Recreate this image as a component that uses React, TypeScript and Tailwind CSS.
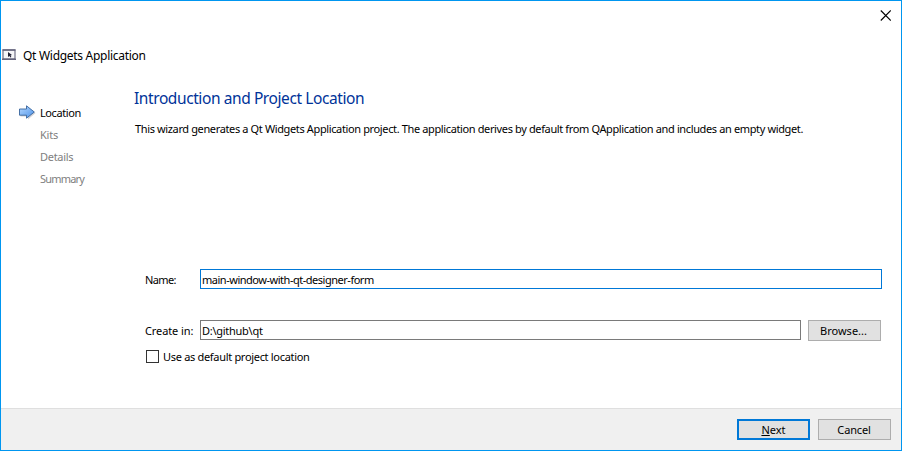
import React from "react";

const steps = [
  { label: "Kits", spacing: "tracking-[-0.2px]" },
  { label: "Details", spacing: "tracking-[-0.3px]" },
  { label: "Summary", spacing: "tracking-[-0.8px]" },
];

function CloseIcon() {
  return (
    <svg width="11" height="11" viewBox="0 0 11 11">
      <path d="M0.8 0.5L10.8 10.5M10.8 0.5L0.8 10.5" stroke="#000" strokeWidth="1.15" fill="none" />
    </svg>
  );
}

function WindowIcon() {
  return (
    <svg width="14" height="12" viewBox="0 0 14 12">
      <rect x="1" y="1" width="12" height="9" fill="#f6f6f8" stroke="#64647c" strokeWidth="1.1" />
      <path d="M0.5 1H13.5" stroke="#64647c" strokeWidth="1.5" />
      <path d="M0 10.3H14" stroke="#64647c" strokeWidth="1.4" />
      <path d="M6 3L10 6L8.5 6.4L9.4 8L8.4 8.6L7.5 7L6 8Z" fill="#242438" />
    </svg>
  );
}

function ArrowIcon() {
  return (
    <svg width="18" height="16" viewBox="0 0 18 16">
      <defs>
        <linearGradient id="arrow" x1="0" y1="0" x2="1" y2="1">
          <stop offset="0" stopColor="#b4d8ff" />
          <stop offset="1" stopColor="#4c91e8" />
        </linearGradient>
      </defs>
      <path d="M1.5 5.2H8.5V2L16.5 8L9 14.6V11.6H1.5Z" fill="#d2d2d6" />
      <path d="M0.5 4H7.5V0.8L15.3 7L7.5 13.2V10.2H0.5Z" fill="url(#arrow)" stroke="#38649c" strokeWidth="0.9" />
    </svg>
  );
}

export default function App() {
  return (
    <div className="flex h-[451px] w-[902px] flex-col overflow-hidden whitespace-nowrap border border-[#0096f0] bg-white font-['Noto_Sans',sans-serif] text-[11px] leading-[16px] text-black">
      <header className="flex h-[67px] flex-col">
        <button className="mr-[10px] mt-[9px] self-end" aria-label="Close">
          <CloseIcon />
        </button>
        <div className="mt-[25px] flex items-center pl-px text-[12px]">
          <WindowIcon />
          <span className="ml-[7px] pt-[2px] tracking-[-0.29px]">Qt Widgets Application</span>
        </div>
      </header>

      <main className="flex h-[340px]">
        <nav className="flex w-[133px] flex-col gap-[6px] pl-[18px] pt-[37px] text-[#808080]">
          <div className="flex items-center text-black">
            <ArrowIcon />
            <span className="ml-[3px] tracking-[-0.4px]">Location</span>
          </div>
          {steps.map((s) => (
            <span key={s.label} className={`pl-[21px] ${s.spacing}`}>{s.label}</span>
          ))}
        </nav>

        <section className="flex w-[750px] flex-col">
          <h1 className="mt-[20px] text-[15.5px] leading-[20px] tracking-[-0.41px] text-[#003399]">Introduction and Project Location</h1>
          <p className="mt-[13px] pl-px tracking-[-0.37px]">
            This wizard generates a Qt Widgets Application project. The application derives by default from QApplication and includes an empty widget.
          </p>
          <div className="mt-[132px] flex h-[20px] items-center pl-[11px]">
            <label className="w-[55px] pt-[2px] tracking-[-0.6px]">Name:</label>
            <div className="flex h-[20px] w-[682px] items-center border border-[#0078d7] pl-[1px] pt-[2px] tracking-[-0.48px]">main-window-with-qt-designer-form</div>
          </div>
          <div className="mt-[31px] flex h-[21px] items-center pl-[11px]">
            <label className="w-[55px] tracking-[-0.1px]">Create in:</label>
            <div className="flex h-[20px] w-[601px] items-center self-start border border-[#7a7a7a] pl-[1px] pt-[2px] tracking-[-0.27px]">D:\github\qt</div>
            <button className="ml-[7px] h-[21px] w-[73px] border border-[#adadad] bg-[#e1e1e1] pr-[2px]">Browse...</button>
          </div>
          <label className="mt-[9px] flex h-[13px] items-center pl-[12px]">
            <span className="h-[13px] w-[13px] border border-[#333]" />
            <span className="ml-[4px] tracking-[-0.31px]">Use as default project location</span>
          </label>
        </section>
      </main>

      <footer className="flex h-[42px] items-start justify-end border-t border-[#dfdfdf] bg-[#f0f0f0] pr-[10px] pt-[10px]">
        <button className="h-[21px] w-[73px] border-2 border-[#0078d7] bg-[#e1e1e1] leading-[17px]">
          <span className="underline">N</span>ext
        </button>
        <button className="ml-[8px] h-[21px] w-[73px] border border-[#adadad] bg-[#e1e1e1] pr-px tracking-[-0.15px]">Cancel</button>
      </footer>
    </div>
  );
}
